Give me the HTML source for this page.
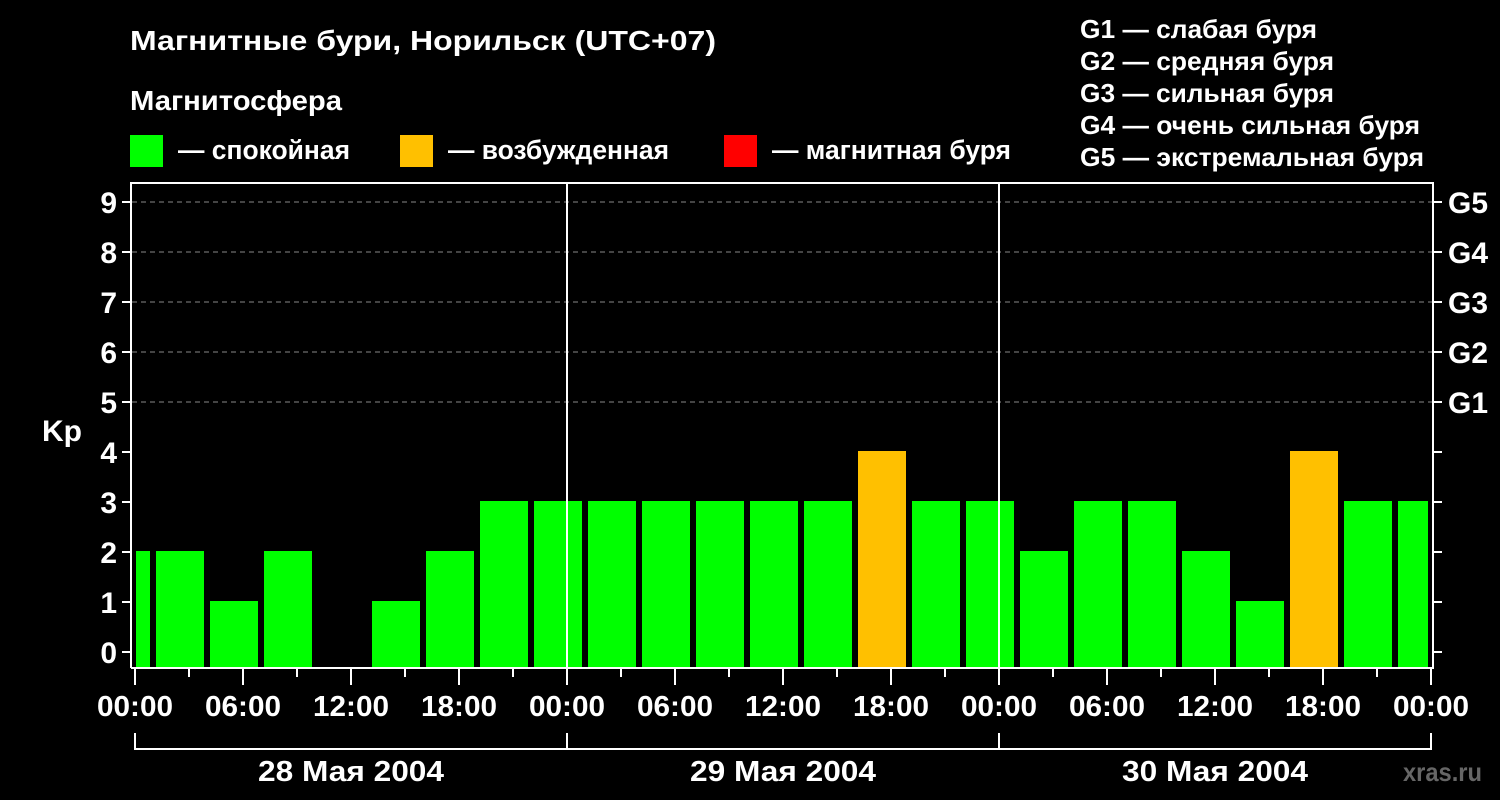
<!DOCTYPE html>
<html><head><meta charset="utf-8"><style>
html,body{margin:0;padding:0;background:#000;width:1500px;height:800px;overflow:hidden}
svg{display:block}
text{font-family:"Liberation Sans",sans-serif;font-weight:bold;fill:#fff}
</style></head><body>
<svg width="1500" height="800" viewBox="0 0 1500 800" xmlns="http://www.w3.org/2000/svg">
<rect width="1500" height="800" fill="#000"/>
<text x="130" y="50" font-size="28" textLength="586" lengthAdjust="spacingAndGlyphs">Магнитные бури, Норильск (UTC+07)</text>
<text x="130" y="110" font-size="28" textLength="212" lengthAdjust="spacingAndGlyphs">Магнитосфера</text>
<rect x="130" y="135" width="33" height="32" fill="#00ff00"/>
<text x="178" y="159" font-size="27" textLength="172" lengthAdjust="spacingAndGlyphs">— спокойная</text>
<rect x="400" y="135" width="33" height="32" fill="#ffc000"/>
<text x="448" y="159" font-size="27" textLength="221" lengthAdjust="spacingAndGlyphs">— возбужденная</text>
<rect x="724" y="135" width="33" height="32" fill="#ff0000"/>
<text x="772" y="159" font-size="27" textLength="239" lengthAdjust="spacingAndGlyphs">— магнитная буря</text>
<g font-size="26">
<text x="1080" y="38" textLength="237" lengthAdjust="spacingAndGlyphs">G1 — слабая буря</text>
<text x="1080" y="70" textLength="254" lengthAdjust="spacingAndGlyphs">G2 — средняя буря</text>
<text x="1080" y="102" textLength="254" lengthAdjust="spacingAndGlyphs">G3 — сильная буря</text>
<text x="1080" y="134" textLength="340" lengthAdjust="spacingAndGlyphs">G4 — очень сильная буря</text>
<text x="1080" y="166" textLength="344" lengthAdjust="spacingAndGlyphs">G5 — экстремальная буря</text>
</g>
<g stroke="#888" stroke-width="1" stroke-dasharray="5,4">
<line x1="132" y1="202" x2="1432" y2="202"/>
<line x1="132" y1="252" x2="1432" y2="252"/>
<line x1="132" y1="302" x2="1432" y2="302"/>
<line x1="132" y1="352" x2="1432" y2="352"/>
<line x1="132" y1="402" x2="1432" y2="402"/>
</g>
<g fill="#00ff00">
<rect x="136" y="551" width="14" height="117"/>
<rect x="156" y="551" width="48" height="117"/>
<rect x="210" y="601" width="48" height="67"/>
<rect x="264" y="551" width="48" height="117"/>
<rect x="372" y="601" width="48" height="67"/>
<rect x="426" y="551" width="48" height="117"/>
<rect x="480" y="501" width="48" height="167"/>
<rect x="534" y="501" width="48" height="167"/>
<rect x="588" y="501" width="48" height="167"/>
<rect x="642" y="501" width="48" height="167"/>
<rect x="696" y="501" width="48" height="167"/>
<rect x="750" y="501" width="48" height="167"/>
<rect x="804" y="501" width="48" height="167"/>
<rect x="912" y="501" width="48" height="167"/>
<rect x="966" y="501" width="48" height="167"/>
<rect x="1020" y="551" width="48" height="117"/>
<rect x="1074" y="501" width="48" height="167"/>
<rect x="1128" y="501" width="48" height="167"/>
<rect x="1182" y="551" width="48" height="117"/>
<rect x="1236" y="601" width="48" height="67"/>
<rect x="1344" y="501" width="48" height="167"/>
<rect x="1398" y="501" width="30" height="167"/>
</g>
<g fill="#ffc000">
<rect x="858" y="451" width="48" height="217"/>
<rect x="1290" y="451" width="48" height="217"/>
</g>
<g stroke="#fff" stroke-width="2" fill="none">
<polyline points="131,668 131,183 1433,183 1433,668 131,668"/>
<line x1="567" y1="183" x2="567" y2="668"/>
<line x1="999" y1="183" x2="999" y2="668"/>
<polyline points="135,733 135,749 1431,749 1431,733"/>
<line x1="567" y1="733" x2="567" y2="749"/>
<line x1="999" y1="733" x2="999" y2="749"/>
</g>
<g stroke="#fff" stroke-width="2">
<line x1="122" y1="202" x2="131" y2="202"/><line x1="122" y1="252" x2="131" y2="252"/>
<line x1="122" y1="302" x2="131" y2="302"/><line x1="122" y1="352" x2="131" y2="352"/>
<line x1="122" y1="402" x2="131" y2="402"/><line x1="122" y1="452" x2="131" y2="452"/>
<line x1="122" y1="502" x2="131" y2="502"/><line x1="122" y1="552" x2="131" y2="552"/>
<line x1="122" y1="602" x2="131" y2="602"/><line x1="122" y1="652" x2="131" y2="652"/>
<line x1="1433" y1="202" x2="1442" y2="202"/><line x1="1433" y1="252" x2="1442" y2="252"/>
<line x1="1433" y1="302" x2="1442" y2="302"/><line x1="1433" y1="352" x2="1442" y2="352"/>
<line x1="1433" y1="402" x2="1442" y2="402"/><line x1="1433" y1="452" x2="1442" y2="452"/>
<line x1="1433" y1="502" x2="1442" y2="502"/><line x1="1433" y1="552" x2="1442" y2="552"/>
<line x1="1433" y1="602" x2="1442" y2="602"/><line x1="1433" y1="652" x2="1442" y2="652"/>
<line x1="135" y1="668" x2="135" y2="685"/><line x1="189" y1="668" x2="189" y2="677"/>
<line x1="243" y1="668" x2="243" y2="685"/><line x1="297" y1="668" x2="297" y2="677"/>
<line x1="351" y1="668" x2="351" y2="685"/><line x1="405" y1="668" x2="405" y2="677"/>
<line x1="459" y1="668" x2="459" y2="685"/><line x1="513" y1="668" x2="513" y2="677"/>
<line x1="567" y1="668" x2="567" y2="685"/><line x1="621" y1="668" x2="621" y2="677"/>
<line x1="675" y1="668" x2="675" y2="685"/><line x1="729" y1="668" x2="729" y2="677"/>
<line x1="783" y1="668" x2="783" y2="685"/><line x1="837" y1="668" x2="837" y2="677"/>
<line x1="891" y1="668" x2="891" y2="685"/><line x1="945" y1="668" x2="945" y2="677"/>
<line x1="999" y1="668" x2="999" y2="685"/><line x1="1053" y1="668" x2="1053" y2="677"/>
<line x1="1107" y1="668" x2="1107" y2="685"/><line x1="1161" y1="668" x2="1161" y2="677"/>
<line x1="1215" y1="668" x2="1215" y2="685"/><line x1="1269" y1="668" x2="1269" y2="677"/>
<line x1="1323" y1="668" x2="1323" y2="685"/><line x1="1377" y1="668" x2="1377" y2="677"/>
<line x1="1431" y1="668" x2="1431" y2="685"/>
</g>
<g font-size="30" text-anchor="end">
<text x="117" y="213">9</text><text x="117" y="263">8</text><text x="117" y="313">7</text>
<text x="117" y="363">6</text><text x="117" y="413">5</text><text x="117" y="463">4</text>
<text x="117" y="513">3</text><text x="117" y="563">2</text><text x="117" y="613">1</text>
<text x="117" y="663">0</text>
</g>
<text x="42" y="441" font-size="30">Kp</text>
<g font-size="30">
<text x="1448" y="213">G5</text><text x="1448" y="263">G4</text><text x="1448" y="313">G3</text>
<text x="1448" y="363">G2</text><text x="1448" y="413">G1</text>
</g>
<g font-size="29" text-anchor="middle">
<text x="135" y="716" textLength="76" lengthAdjust="spacingAndGlyphs">00:00</text><text x="243" y="716" textLength="76" lengthAdjust="spacingAndGlyphs">06:00</text><text x="351" y="716" textLength="76" lengthAdjust="spacingAndGlyphs">12:00</text>
<text x="459" y="716" textLength="76" lengthAdjust="spacingAndGlyphs">18:00</text><text x="567" y="716" textLength="76" lengthAdjust="spacingAndGlyphs">00:00</text><text x="675" y="716" textLength="76" lengthAdjust="spacingAndGlyphs">06:00</text>
<text x="783" y="716" textLength="76" lengthAdjust="spacingAndGlyphs">12:00</text><text x="891" y="716" textLength="76" lengthAdjust="spacingAndGlyphs">18:00</text><text x="999" y="716" textLength="76" lengthAdjust="spacingAndGlyphs">00:00</text>
<text x="1107" y="716" textLength="76" lengthAdjust="spacingAndGlyphs">06:00</text><text x="1215" y="716" textLength="76" lengthAdjust="spacingAndGlyphs">12:00</text><text x="1323" y="716" textLength="76" lengthAdjust="spacingAndGlyphs">18:00</text>
<text x="1431" y="716" textLength="76" lengthAdjust="spacingAndGlyphs">00:00</text>
<text x="351" y="781" textLength="186" lengthAdjust="spacingAndGlyphs">28 Мая 2004</text>
<text x="783" y="781" textLength="186" lengthAdjust="spacingAndGlyphs">29 Мая 2004</text>
<text x="1215" y="781" textLength="186" lengthAdjust="spacingAndGlyphs">30 Мая 2004</text>
</g>
<text x="1403" y="781" font-size="26" textLength="79" lengthAdjust="spacingAndGlyphs" style="fill:#666">xras.ru</text>
</svg>
</body></html>
